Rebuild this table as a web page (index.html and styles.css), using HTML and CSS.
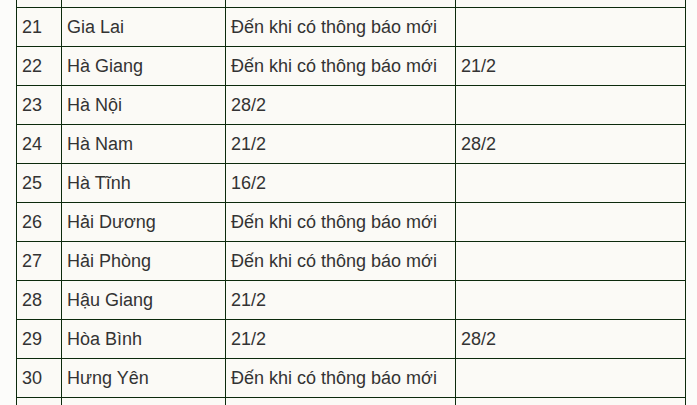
FILE: index.html
```html
<!DOCTYPE html>
<html lang="vi">
<head>
<meta charset="utf-8">
<link rel="stylesheet" href="styles.css">
</head>
<body>
<div class="page">
<table class="dates">
<colgroup><col class="c-no"><col class="c-name"><col class="c-a"><col class="c-b"></colgroup>
<tbody>
<tr><td></td><td></td><td></td><td></td></tr>
<tr><td>21</td><td>Gia Lai</td><td>Đến khi có thông báo mới</td><td></td></tr>
<tr><td>22</td><td>Hà Giang</td><td>Đến khi có thông báo mới</td><td>21/2</td></tr>
<tr><td>23</td><td>Hà Nội</td><td>28/2</td><td></td></tr>
<tr><td>24</td><td>Hà Nam</td><td>21/2</td><td>28/2</td></tr>
<tr><td>25</td><td>Hà Tĩnh</td><td>16/2</td><td></td></tr>
<tr><td>26</td><td>Hải Dương</td><td>Đến khi có thông báo mới</td><td></td></tr>
<tr><td>27</td><td>Hải Phòng</td><td>Đến khi có thông báo mới</td><td></td></tr>
<tr><td>28</td><td>Hậu Giang</td><td>21/2</td><td></td></tr>
<tr><td>29</td><td>Hòa Bình</td><td>21/2</td><td>28/2</td></tr>
<tr><td>30</td><td>Hưng Yên</td><td>Đến khi có thông báo mới</td><td></td></tr>
<tr><td></td><td></td><td></td><td></td></tr>
</tbody>
</table>
</div>
</body>
</html>
```

FILE: styles.css
```css
html, body {
  margin: 0;
  padding: 0;
  background: #fcfcfa;
  overflow: hidden;
}
.page {
  padding: 0 11px 0 16px;
}
.dates {
  margin-top: -32px;
  border-collapse: collapse;
  table-layout: fixed;
  width: 670px;
  background: #fbfaf6;
  font-family: "Liberation Sans", Arial, sans-serif;
  font-size: 18px;
  color: #333333;
}
.c-no { width: 45px; }
.c-name { width: 164px; }
.c-a { width: 230px; }
.c-b { width: 230px; }
.dates td {
  border: 1px solid #0c2a0c;
  height: 38px;
  padding: 0 5px;
  line-height: 20px;
  vertical-align: middle;
  white-space: nowrap;
}
```
